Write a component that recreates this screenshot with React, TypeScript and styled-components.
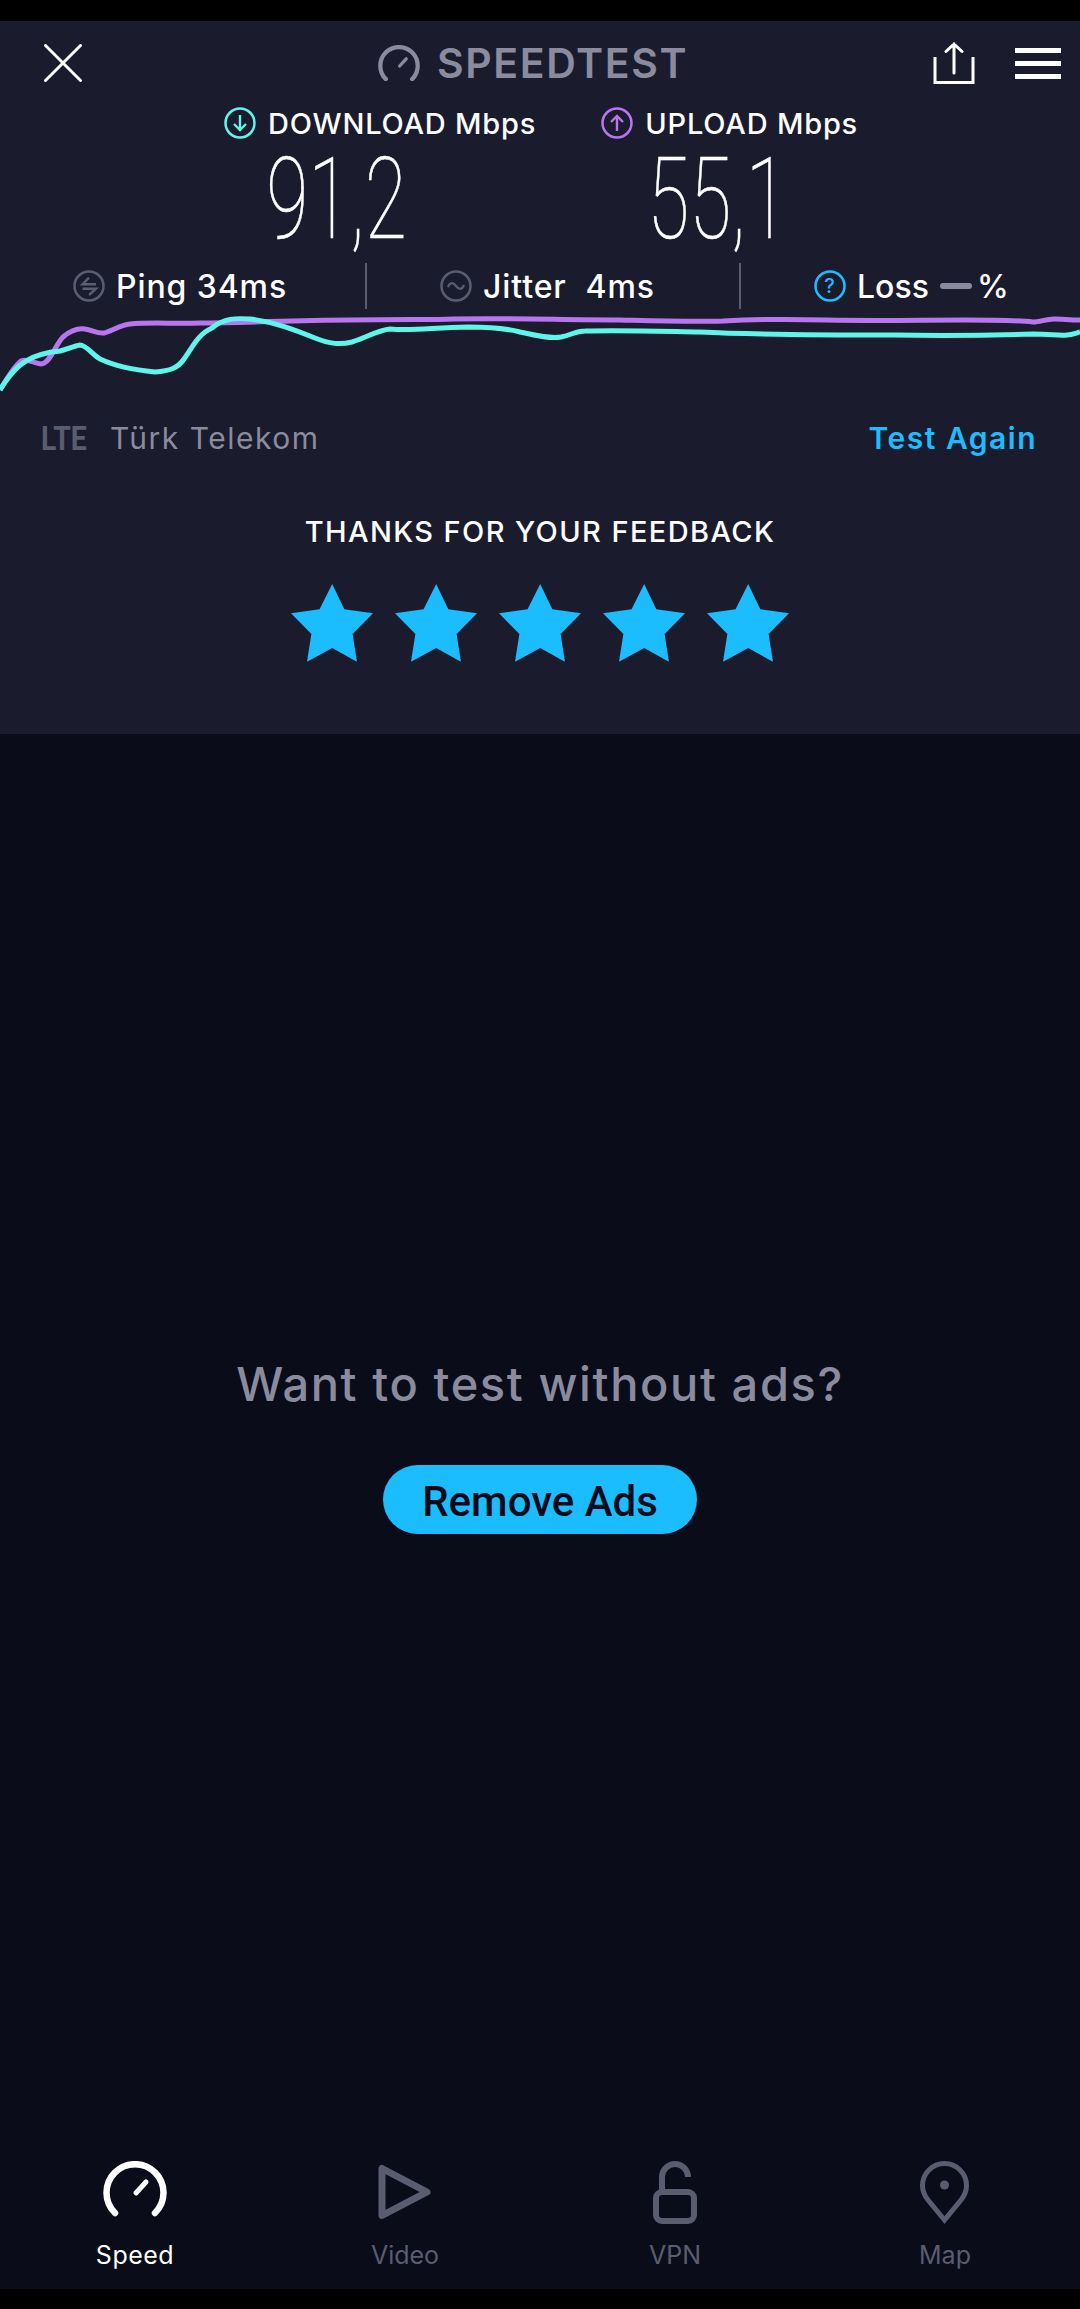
import React from "react";
import styled, { createGlobalStyle } from "styled-components";

const colors = {
  panel: "#1a1c2e",
  page: "#0a0c1a",
  blue: "#1cbdff",
  teal: "#5ff5ea",
  purple: "#b975f0",
  grey: "#8a8b9f",
  dim: "#5a5c70",
};

const purpleLine =
  "M0 390 C6 380 14 366 21 361 C27 358 34 363 41 364 C50 364 55 345 63 337 C70 331 78 328 85 329 C92 330 98 334 104 333 C112 331 120 325 130 324 C150 322 175 324 200 323 C250 323 290 320 350 320 C400 319 430 320 454 319 C520 318 560 320 620 320 C660 321 690 322 723 321 C760 319 790 319 826 320 C880 321 920 320 964 320 C990 320 1015 320 1033 322 C1040 322 1046 319 1054 319 C1062 319 1070 320 1080 320";
const tealLine =
  "M0 390 C8 377 16 366 28 360 C38 354 50 352 60 351 C68 349 74 346 80 345 C86 345 92 354 100 359 C115 366 135 370 155 372 C170 371 178 368 184 359 C192 348 198 334 212 328 C224 318 236 318 250 319 C275 322 295 330 315 338 C330 344 340 345 352 342 C368 337 378 330 390 329 C410 331 430 328 468 327 C490 327 505 328 520 332 C535 335 548 339 561 337 C572 335 575 331 585 331 C620 330 650 331 700 332 C760 335 830 335 895 335 C950 336 1000 335 1033 334 C1050 334 1060 336 1067 335 C1072 335 1076 333 1080 332";

const GlobalStyle = createGlobalStyle`
  html, body {
    margin: 0;
    padding: 0;
    background: #000;
  }
  * {
    box-sizing: border-box;
  }
`;

const Screen = styled.div`
  width: 1080px;
  height: 2309px;
  display: flex;
  flex-direction: column;
  background: ${colors.page};
  font-family: Inter, "Noto Sans", sans-serif;
  color: #fff;
  overflow: hidden;
`;

const BlackBar = styled.div<{ $h: number }>`
  height: ${(p) => p.$h}px;
  flex: none;
  background: #000;
`;

const Panel = styled.section`
  height: 713px;
  flex: none;
  background: ${colors.panel};
`;

const TopBar = styled.header`
  height: 84px;
  display: flex;
  align-items: center;
  padding-left: 44px;
`;

const Title = styled.div`
  display: flex;
  align-items: center;
  gap: 17px;
  margin-left: 296px;
  width: 555px;
  color: ${colors.grey};
  font-size: 41px;
  font-weight: 600;
  letter-spacing: 1.6px;
`;

const TopActions = styled.div`
  display: flex;
  align-items: center;
  gap: 40px;
`;

const Hamburger = styled.div`
  width: 46px;
  height: 31px;
  display: flex;
  flex-direction: column;
  justify-content: space-between;
`;

const HamburgerBar = styled.span`
  height: 5px;
  background: #fff;
`;

const SpeedHeads = styled.div`
  height: 36px;
  display: flex;
  align-items: center;
  padding-left: 224px;
  gap: 65px;
`;

const SpeedHead = styled.div`
  display: flex;
  align-items: center;
  gap: 12px;
  font-size: 29px;
  font-weight: 500;
  letter-spacing: 0.8px;
  white-space: nowrap;
`;

const BigValues = styled.div`
  height: 122px;
  display: flex;
  padding-left: 146px;
`;

const BigValue = styled.div`
  width: 381px;
  text-align: center;
  font-family: Roboto, sans-serif;
  font-weight: 100;
  font-size: 113px;
  line-height: 118px;
  -webkit-text-stroke: 0.6px #fff;
  transform: scaleX(0.68);
`;

const StatRow = styled.div`
  height: 46px;
  display: flex;
  align-items: center;
`;

const Stat = styled.div<{ $w?: number }>`
  width: ${(p) => (p.$w ? `${p.$w}px` : "auto")};
  display: flex;
  align-items: center;
  gap: 11px;
  padding-left: 73px;
  font-size: 32px;
  font-weight: 500;
  letter-spacing: 0.9px;
  white-space: pre;
`;

const StatDivider = styled.div`
  width: 2px;
  height: 46px;
  flex: none;
  background: ${colors.dim};
`;

const LossLabel = styled.span`
  letter-spacing: 0;
`;

const LossValue = styled.span`
  display: flex;
  align-items: center;
  gap: 5px;
`;

const LossDash = styled.span`
  width: 32px;
  height: 6px;
  border-radius: 3px;
  background: ${colors.grey};
`;

const Chart = styled.svg`
  display: block;
  width: 1080px;
  height: 86px;
  margin-top: 3px;
`;

const CarrierRow = styled.div`
  height: 40px;
  margin-top: 20px;
  display: flex;
  align-items: center;
  justify-content: space-between;
  padding: 0 43px 0 41px;
`;

const Carrier = styled.div`
  display: flex;
  align-items: center;
  gap: 21px;
  color: ${colors.grey};
  font-size: 30px;
  letter-spacing: 1.5px;
`;

const NetworkType = styled.span`
  flex: none;
  width: 48px;
  color: ${colors.dim};
  font-family: Roboto, sans-serif;
  font-size: 33px;
  font-weight: 700;
  letter-spacing: 0;
  white-space: nowrap;
  transform: scaleX(0.86);
  transform-origin: left;
`;

const TestAgain = styled.span`
  color: ${colors.blue};
  font-size: 30px;
  font-weight: 600;
  letter-spacing: 1.5px;
`;

const FeedbackTitle = styled.div`
  margin-top: 56px;
  text-align: center;
  font-size: 29px;
  font-weight: 500;
  line-height: 36px;
  letter-spacing: 1.4px;
`;

const Stars = styled.div`
  margin-top: 34px;
  display: flex;
  justify-content: center;
  gap: 22px;
`;

const AdArea = styled.main`
  flex: 1;
  display: flex;
  flex-direction: column;
  align-items: center;
  padding-top: 620px;
`;

const AdText = styled.div`
  color: ${colors.grey};
  font-size: 47px;
  font-weight: 500;
  line-height: 60px;
  letter-spacing: 1.6px;
`;

const RemoveAds = styled.button`
  width: 314px;
  height: 69px;
  margin-top: 51px;
  padding: 3px 0 0;
  border: 0;
  border-radius: 35px;
  background: ${colors.blue};
  color: ${colors.page};
  font-family: Roboto, sans-serif;
  font-size: 42px;
  font-weight: 500;
`;

const Nav = styled.nav`
  display: grid;
  grid-template-columns: repeat(4, 270px);
  height: 128px;
  flex: none;
`;

const NavItem = styled.div<{ $active?: boolean }>`
  display: flex;
  flex-direction: column;
  align-items: center;
  color: ${(p) => (p.$active ? "#fff" : colors.dim)};
  font-size: 25px;
  letter-spacing: ${(p) => (p.$active ? "0.5px" : "0")};
`;

const NavIcon = styled.div`
  height: 66px;
  display: flex;
  align-items: flex-start;
`;

const NavLabel = styled.span`
  margin-top: 13px;
  line-height: 30px;
`;

const Gauge = ({ color, size }: { color: string; size: number }) => (
  <svg width={size} height={(size * 56) / 64} viewBox="0 0 64 56" fill="none">
    <path d="M12 52A28.5 28.500 0 1 1 52 52" stroke={color} strokeWidth="6.5" strokeLinecap="round" />
    <path d="M33 32L43 21" stroke={color} strokeWidth="5" strokeLinecap="round" />
  </svg>
);

const RingIcon = ({ color, children }: { color: string; children: React.ReactNode }) => (
  <svg width="32" height="32" viewBox="0 0 32 32" fill="none">
    <circle cx="16" cy="16" r="14.5" stroke={color} strokeWidth="2.5" />
    {children}
  </svg>
);

const Star = () => (
  <svg width="82" height="78" viewBox="0 0 82 78">
    <path
      d="M41.200 0L53.300 25.300 82 29.300 61.600 50 65.900 77.700 41.200 64 16 77.700 20.400 50 0 29.300 28.600 25.300Z"
      fill={colors.blue}
    />
  </svg>
);

export default function App(): JSX.Element {
  return (
    <Screen>
      <GlobalStyle />
      <BlackBar $h={21} />
      <Panel>
        <TopBar>
          <svg width="38" height="38" viewBox="0 0 38 38" fill="none">
            <path d="M1.5 1.5L36.5 36.5M36.5 1.5L1.5 36.5" stroke="#fff" strokeWidth="3" strokeLinecap="round" />
          </svg>
          <Title>
            <Gauge color={colors.grey} size={42} />
            SPEEDTEST
          </Title>
          <TopActions>
            <svg width="42" height="42" viewBox="0 0 42 42" fill="none">
              <path d="M2 15V40.500H40V15" stroke="#fff" strokeWidth="3" />
              <path d="M21 31V2M13 9.500L21 2 29 9.500" stroke="#fff" strokeWidth="3" strokeLinecap="round" />
            </svg>
            <Hamburger>
              <HamburgerBar />
              <HamburgerBar />
              <HamburgerBar />
            </Hamburger>
          </TopActions>
        </TopBar>

        <SpeedHeads>
          <SpeedHead>
            <RingIcon color={colors.teal}>
              <path d="M16 8V23M10 17L16 23 22 17" stroke={colors.teal} strokeWidth="2.4" />
            </RingIcon>
            DOWNLOAD Mbps
          </SpeedHead>
          <SpeedHead>
            <RingIcon color={colors.purple}>
              <path d="M16 24V9M10 15L16 9 22 15" stroke={colors.purple} strokeWidth="2.4" />
            </RingIcon>
            UPLOAD Mbps
          </SpeedHead>
        </SpeedHeads>

        <BigValues>
          <BigValue>91,2</BigValue>
          <BigValue>55,1</BigValue>
        </BigValues>

        <StatRow>
          <Stat $w={365}>
            <RingIcon color={colors.dim}>
              <path d="M23 14.300H9.500L16 7.700M9.500 18.700H23L16 25" stroke={colors.dim} strokeWidth="2.4" />
            </RingIcon>
            Ping 34ms
          </Stat>
          <StatDivider />
          <Stat $w={372}>
            <RingIcon color={colors.dim}>
              <path d="M8 17C10 12 13 12 16 16S22 20 24 15" stroke={colors.dim} strokeWidth="2.2" />
            </RingIcon>
            {"Jitter  4ms"}
          </Stat>
          <StatDivider />
          <Stat>
            <RingIcon color={colors.blue}>
              <text x="16" y="23" textAnchor="middle" fontSize="20" fontFamily="Inter, sans-serif" fill={colors.blue}>
                ?
              </text>
            </RingIcon>
            <LossLabel>Loss</LossLabel>
            <LossValue>
              <LossDash />%
            </LossValue>
          </Stat>
        </StatRow>

        <Chart viewBox="0 312 1080 86" fill="none">
          <path d={purpleLine} stroke={colors.purple} strokeWidth="5" />
          <path d={tealLine} stroke={colors.teal} strokeWidth="5" />
        </Chart>

        <CarrierRow>
          <Carrier>
            <NetworkType>LTE</NetworkType>
            Türk Telekom
          </Carrier>
          <TestAgain>Test Again</TestAgain>
        </CarrierRow>

        <FeedbackTitle>THANKS FOR YOUR FEEDBACK</FeedbackTitle>
        <Stars>
          <Star />
          <Star />
          <Star />
          <Star />
          <Star />
        </Stars>
      </Panel>

      <AdArea>
        <AdText>Want to test without ads?</AdText>
        <RemoveAds>Remove Ads</RemoveAds>
      </AdArea>

      <Nav>
        <NavItem $active>
          <NavIcon>
            <Gauge color="#fff" size={64} />
          </NavIcon>
          <NavLabel>Speed</NavLabel>
        </NavItem>
        <NavItem>
          <NavIcon>
            <svg width="54" height="62" viewBox="0 0 54 62" fill="none">
              <path d="M4 7.500V54.500L49 31Z" stroke={colors.dim} strokeWidth="7" strokeLinejoin="round" />
            </svg>
          </NavIcon>
          <NavLabel>Video</NavLabel>
        </NavItem>
        <NavItem>
          <NavIcon>
            <svg width="46" height="64" viewBox="0 0 46 64" fill="none">
              <path d="M10 29V16A13 13 0 0 1 36 16" stroke={colors.dim} strokeWidth="6" />
              <rect x="4" y="31" width="38" height="29" rx="6" stroke={colors.dim} strokeWidth="6" />
            </svg>
          </NavIcon>
          <NavLabel>VPN</NavLabel>
        </NavItem>
        <NavItem>
          <NavIcon>
            <svg width="50" height="64" viewBox="0 0 50 64" fill="none">
              <path
                d="M24.500 59L8 39C4 34 2.500 29 2.500 24.500A22 22 0 0 1 46.500 24.500C46.500 29 45 34 41 39Z"
                stroke={colors.dim}
                strokeWidth="5"
              />
              <circle cx="24.500" cy="24" r="4.500" fill={colors.dim} />
            </svg>
          </NavIcon>
          <NavLabel>Map</NavLabel>
        </NavItem>
      </Nav>
      <BlackBar $h={20} />
    </Screen>
  );
}
